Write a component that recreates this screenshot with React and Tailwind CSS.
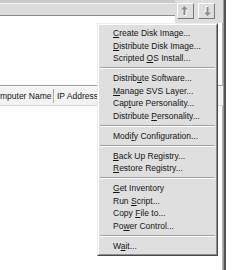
import React from 'react';

const MENU = [
    ['', 'C', 'reate Disk Image...'],
    ['', 'D', 'istribute Disk Image...'],
    ['Scripted ', 'O', 'S Install...'],
    'sep',
    ['Distrib', 'u', 'te Software...'],
    ['', 'M', 'anage SVS Layer...'],
    ['Cap', 't', 'ure Personality...'],
    ['Distribute ', 'P', 'ersonality...'],
    'sep',
    ['Modi', 'f', 'y Configuration...'],
    'sep',
    ['', 'B', 'ack Up Registry...'],
    ['', 'R', 'estore Registry...'],
    'sep',
    ['', 'G', 'et Inventory'],
    ['Run ', 'S', 'cript...'],
    ['Copy ', 'F', 'ile to...'],
    ['Po', 'w', 'er Control...'],
    'sep',
    ['W', 'a', 'it...'],
];

function ArrowIcon({ down }) {
    return (
        <svg width="9" height="10" viewBox="0 0 9 10" className={down ? 'rotate-180' : ''}>
            <g transform="translate(1 1)" fill="#ffffff">
                <path d="M3.5 0 L7 3.5 H4.5 V9 H2.5 V3.5 H0 Z" />
            </g>
            <g fill="#8c8c8c">
                <path d="M3.5 0 L7 3.5 H4.5 V9 H2.5 V3.5 H0 Z" />
            </g>
        </svg>
    );
}

function ToolButton({ down }) {
    return (
        <div className="w-[17px] h-[16px] border border-t-white border-l-white border-r-[#7a7a7a] border-b-[#7a7a7a] bg-[#dedede] flex items-center justify-center">
            <ArrowIcon down={down} />
        </div>
    );
}

export default function App() {
    return (
        <div className="relative w-[240px] h-[270px] bg-white overflow-hidden font-['Liberation_Sans',Arial,sans-serif] text-[8.5px] text-[#151515]">
            <div className="flex h-full">
                {/* main pane */}
                <div className="w-[223px] flex flex-col">
                    <div className="flex h-[23px]">
                        <div className="flex-1 flex flex-col">
                            <div className="h-[3px] bg-[#cacaca]" />
                            <div className="h-[1px] bg-[#f2f2f2]" />
                            <div className="h-[11px] bg-[#dcdcdc]" />
                            <div className="h-[1px] bg-[#8a8a8a]" />
                        </div>
                        <div className="w-[48px] bg-[#dedede] flex gap-[4px] pl-[2px] pt-[3px]">
                            <ToolButton />
                            <ToolButton down />
                        </div>
                    </div>
                    <div className="h-[62px] border-r border-r-[#b4b4b4]" />
                    <div className="h-[1px] bg-[#9c9c9c]" />
                    <div className="h-[1px] bg-white" />
                    <div className="h-[19px] bg-[#f3f3f3] border-b border-b-[#d6d6d6] flex items-center overflow-hidden">
                        <div className="w-[54px] shrink-0 border-r border-r-[#a8a8a8] h-[14px] flex items-center">
                            <span className="whitespace-nowrap">mputer Name</span>
                        </div>
                        <div className="pl-[3px] whitespace-nowrap">IP Address</div>
                    </div>
                    <div className="flex-1 border-r border-r-[#b4b4b4]" />
                </div>
                {/* right frame edge */}
                <div className="w-[1px] bg-[#9a9a9a]" />
                <div className="w-[2px] bg-[#555555]" />
                <div className="flex-1 bg-white" />
            </div>

            {/* context menu */}
            <div className="absolute left-[97px] top-[23px] w-[121px] border border-t-[#ececec] border-l-[#ececec] border-r-[#4a4a4a] border-b-[#4a4a4a]">
                <div className="border border-t-white border-l-white border-r-[#8e8e8e] border-b-[#8e8e8e] bg-[#dfdfdf] pt-[2px] pb-[2px]">
                    {MENU.map((item, i) =>
                        item === 'sep' ? (
                            <div key={i} className="h-[7.5px] flex flex-col justify-center px-[1px]">
                                <div className="h-[1px] bg-[#a2a2a2]" />
                                <div className="h-[1px] bg-white" />
                            </div>
                        ) : (
                            <div key={i} className="h-[12.5px] leading-[12.5px] pl-[14px] whitespace-nowrap">
                                {item[0]}
                                <span className="underline underline-offset-[1px]">{item[1]}</span>
                                {item[2]}
                            </div>
                        )
                    )}
                </div>
            </div>
        </div>
    );
}
